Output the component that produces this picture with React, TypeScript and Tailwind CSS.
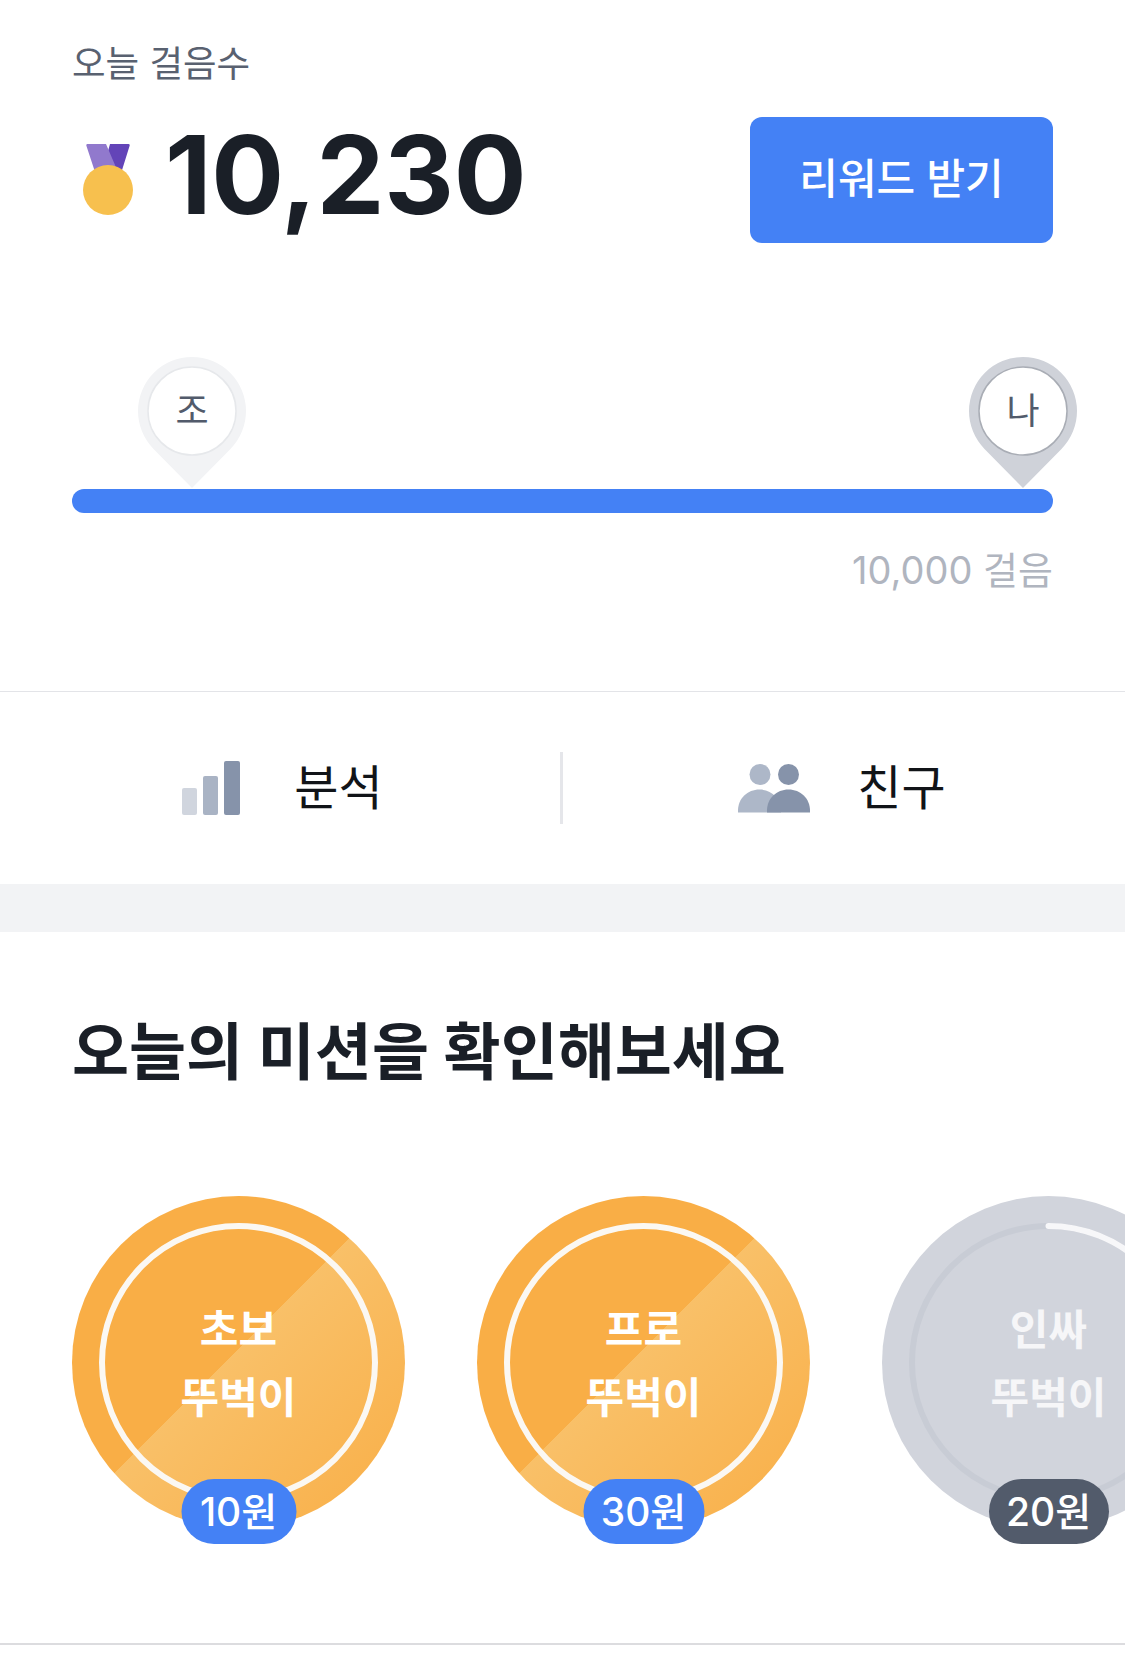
import React from "react";

const font = "font-['Inter','Noto_Sans_CJK_KR',sans-serif]";

const Medal = () => (
  <svg className="ml-[11px]" width="50" height="74" viewBox="0 0 50 74">
    <path d="M27 1h18.500a1.200 1.200 0 0 1 1.200 1.500L37.500 32 20 26z" fill="#6344b8" />
    <path d="M4.500 1H23l12 28-22 3L3.300 2.500A1.200 1.200 0 0 1 4.500 1z" fill="#9179cd" />
    <circle cx="25" cy="47" r="25" fill="#f7c04e" />
  </svg>
);

const Pin = ({ label, fill, line, className }: { label: string; fill: string; line: string; className: string }) => (
  <div className={`absolute bottom-[calc(100%+1px)] w-[108px] h-[131px] ${className}`}>
    <svg width="108" height="131" viewBox="0 0 108 131">
      <path d="M54 131 15.500 91.900A54 54 0 1 1 92.500 91.900Z" fill={fill} />
      <circle cx="54" cy="54" r="44" fill="#fff" stroke={line} strokeWidth="1.500" />
    </svg>
    <span className="absolute left-0 top-[33px] w-full text-center text-[36px] leading-[42px] text-[#525b6b]">{label}</span>
  </div>
);

const BarsIcon = () => (
  <div className="flex items-end gap-[6px] h-[54px]">
    <div className="w-[15px] h-[27px] rounded-[2px] bg-[#d0d5de]" />
    <div className="w-[15px] h-[39px] rounded-[2px] bg-[#a9b3c4]" />
    <div className="w-[16px] h-[54px] rounded-[2px] bg-[#8693aa]" />
  </div>
);

const FriendsIcon = () => (
  <svg width="72" height="50" viewBox="0 0 72 50">
    <circle cx="22" cy="11.500" r="10.500" fill="#adb7c8" />
    <circle cx="50.500" cy="11.500" r="10.500" fill="#8693aa" />
    <path d="M0 49.500v-2C0 35.500 9.500 26.500 21.500 26.500c12 0 21.500 9 21.500 21v2z" fill="#adb7c8" />
    <path d="M29 49.500v-2c0-12 9.500-21 21.500-21S72 35.500 72 47.500v2z" fill="#8693aa" />
  </svg>
);

const Mission = ({ top, price, badge, off }: { top: string; price: string; badge: string; off?: boolean }) => (
  <div
    className={`relative shrink-0 w-[333px] h-[333px] rounded-full flex flex-col items-center justify-center pt-[2px] font-semibold text-[42px] leading-[68px] ${
      off
        ? "bg-[#d1d4dc] text-white/80"
        : "bg-[linear-gradient(135deg,#f9ae46_48%,#f9c068_48%,#f9ae46_100%)] text-white"
    }`}
  >
    <svg className="absolute inset-0" width="333" height="333" viewBox="0 0 333 333">
      {off ? (
        <>
          <circle cx="166.500" cy="166.500" r="136.500" fill="none" stroke="#c8ccd5" strokeWidth="6" />
          <path d="M166.500 30A136.500 136.500 0 0 1 303 166.500" fill="none" stroke="#f7f7f9" strokeWidth="6" strokeLinecap="round" />
        </>
      ) : (
        <circle cx="166.500" cy="166.500" r="136.500" fill="none" stroke="#fbf8f3" strokeWidth="6" />
      )}
    </svg>
    <span className="relative">{top}</span>
    <span className="relative">뚜벅이</span>
    <span
      className={`absolute left-1/2 -translate-x-1/2 bottom-[-15px] h-[65px] rounded-full flex items-center justify-center text-[39px] font-medium leading-none text-white ${badge}`}
    >
      {price}
    </span>
  </div>
);

export default function App() {
  return (
    <div className={`w-full h-[1680px] bg-white overflow-hidden ${font}`}>
      <section className="px-[72px] pt-[43px] h-[692px] border-b border-[#e3e4e8]">
        <div className="text-[36.500px] leading-[42px] text-[#596170]">오늘 걸음수</div>
        <div className="mt-[32px] flex items-center justify-between">
          <div className="flex items-center">
            <Medal />
            <span className="ml-[32px] mb-[10px] text-[108px] leading-[116px] font-bold tracking-[-0.250px] text-[#1a1f27]">10,230</span>
          </div>
          <button className="w-[303px] h-[126px] pb-[3px] rounded-[12px] bg-[#4481f5] text-white text-[42px] font-medium">리워드 받기</button>
        </div>
        <div className="relative mt-[246px] h-[24px] rounded-full bg-[#4481f5]">
          <Pin label="조" fill="#f2f3f5" line="#e6e8eb" className="left-[66px]" />
          <Pin label="나" fill="#cfd2d9" line="#a9adb5" className="right-[-24px]" />
        </div>
        <div className="mt-[34px] text-right text-[38px] leading-[46px] text-[#b0b5bf]">10,000 걸음</div>
      </section>

      <section className="flex items-center h-[192px]">
        <div className="flex-1 pl-[5px] flex items-center justify-center gap-[54px]">
          <BarsIcon />
          <span className="text-[48px] leading-none text-[#111418]">분석</span>
        </div>
        <div className="w-[3px] h-[72px] bg-[#e5e6ea]" />
        <div className="w-[562px] pr-[4px] flex items-center justify-center gap-[47px]">
          <FriendsIcon />
          <span className="text-[48px] leading-none text-[#111418]">친구</span>
        </div>
      </section>

      <div className="h-[48px] bg-[#f2f3f5]" />

      <section className="h-[713px] border-b-2 border-[#dcdcdf]">
        <h2 className="px-[72px] pt-[84px] text-[62px] leading-[74px] font-bold text-[#1a1f27]">오늘의 미션을 확인해보세요</h2>
        <div className="mt-[106px] pl-[72px] pb-[20px] flex gap-[72px] overflow-hidden">
          <Mission top="초보" price="10원" badge="w-[115px] bg-[#4481f5]" />
          <Mission top="프로" price="30원" badge="w-[121px] bg-[#4481f5]" />
          <Mission top="인싸" price="20원" badge="w-[120px] bg-[#525b6b]" off />
        </div>
      </section>
    </div>
  );
}
